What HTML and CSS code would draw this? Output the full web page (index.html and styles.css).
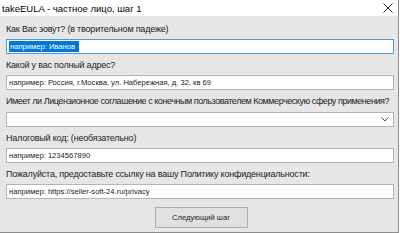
FILE: index.html
```html
<!DOCTYPE html>
<html lang="ru">
<head>
    <meta charset="UTF-8">
    <title>takeEULA</title>
    <link rel="stylesheet" href="styles.css">
</head>
<body>
    <section class="window">
        <header class="titlebar">
            <span class="title">takeEULA - частное лицо, шаг 1</span>
            <svg class="close" width="10" height="10" viewBox="0 0 10 10">
                <path d="M0.5 0.5 L9.5 9.5 M9.5 0.5 L0.5 9.5" stroke="#333" stroke-width="1" fill="none"/>
            </svg>
        </header>
        <section class="form">
            <div class="field first">
                <p class="label">Как Вас зовут? (в творительном падеже)</p>
                <div class="input focused"><span class="selected">например: Иванов</span></div>
            </div>
            <div class="field">
                <p class="label">Какой у вас полный адрес?</p>
                <div class="input">например: Россия, г.Москва, ул. Набережная, д. 32, кв 69</div>
            </div>
            <div class="field wide">
                <p class="label long">Имеет ли Лицензионное соглашение с конечным пользователем Коммерческую сферу применения?</p>
                <div class="input select">
                    <svg class="chevron" width="8" height="5" viewBox="0 0 8 5">
                        <polyline points="0.5,0.5 4,4 7.5,0.5" stroke="#555" stroke-width="1" fill="none"/>
                    </svg>
                </div>
            </div>
            <div class="field">
                <p class="label">Налоговый код: (необязательно)</p>
                <div class="input">например: 1234567890</div>
            </div>
            <div class="field">
                <p class="label">Пожалуйста, предоставьте ссылку на вашу Политику конфиденциальности:</p>
                <div class="input">например: https://seller-soft-24.ru/privacy</div>
            </div>
            <div class="actions">
                <button class="btn">Следующий шаг</button>
            </div>
        </section>
    </section>
</body>
</html>
```

FILE: styles.css
```css
body {
    margin: 0;
    padding: 0;
    background: #ffffff;
    font-family: "Liberation Sans", Arial, sans-serif;
}

.window {
    width: 398px;
    height: 232px;
    background: #e6e6e6;
    border-right: 1px solid #8c8c8c;
    border-bottom: 1px solid #8c8c8c;
    display: flex;
    flex-direction: column;
}

.titlebar {
    height: 16px;
    background: #ffffff;
    display: flex;
    align-items: center;
    justify-content: space-between;
    padding: 0 5px 0 2px;
}

.title {
    font-size: 9.5px;
    color: #000;
}

.form {
    padding: 0 4px 0 6px;
}

.field {
    margin-top: 5px;
}

.field.first {
    margin-top: 7px;
}

.field.wide {
    margin-top: 5px;
}

.label {
    margin: 0 0 4px 0;
    font-size: 9px;
    line-height: 12px;
    letter-spacing: -0.2px;
    color: #222;
    white-space: nowrap;
}

.label.long {
    letter-spacing: -0.45px;
    margin-bottom: 5px;
}

.input {
    height: 13px;
    background: #ffffff;
    border: 1px solid #b4b4b4;
    padding: 0 2px;
    font-size: 7.6px;
    line-height: 13px;
    color: #222;
    white-space: nowrap;
    overflow: hidden;
}

.input.focused {
    border-color: #4a9ee0;
}

.selected {
    background: #0078d7;
    color: #ffffff;
    padding: 1px 4px 1px 1px;
}

.select {
    display: flex;
    align-items: center;
    justify-content: flex-end;
    padding-right: 4px;
}

.actions {
    display: flex;
    justify-content: center;
    margin-top: 8px;
}

.btn {
    width: 93px;
    height: 21px;
    margin-left: 2px;
    background: #e1e1e1;
    border: 1px solid #adadad;
    font-family: "Liberation Sans", Arial, sans-serif;
    font-size: 7.6px;
    color: #222;
    padding: 0;
}
```
